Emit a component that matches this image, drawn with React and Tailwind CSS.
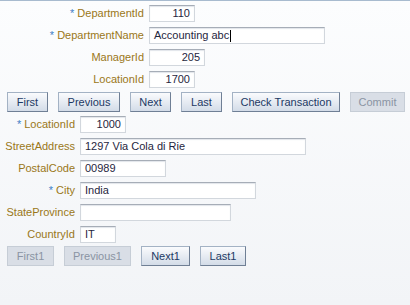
const font = { fontFamily: '"Liberation Sans", Arial, sans-serif' };

const topFields = [
  { label: "DepartmentId", value: "110", width: "w-[46px]", required: true, align: "right" },
  { label: "DepartmentName", value: "Accounting abc", width: "w-[176px]", required: true, caret: true },
  { label: "ManagerId", value: "205", width: "w-[56px]", align: "right" },
  { label: "LocationId", value: "1700", width: "w-[46px]", align: "right" },
];

const bottomFields = [
  { label: "LocationId", value: "1000", width: "w-[46px]", required: true, align: "right" },
  { label: "StreetAddress", value: "1297 Via Cola di Rie", width: "w-[226px]" },
  { label: "PostalCode", value: "00989", width: "w-[86px]" },
  { label: "City", value: "India", width: "w-[176px]", required: true },
  { label: "StateProvince", value: "", width: "w-[151px]" },
  { label: "CountryId", value: "IT", width: "w-[36px]" },
];

function Field({ field, labelWidth }) {
  return (
    <div className="flex h-[17px] items-center">
      <div
        className={`${labelWidth} shrink-0 pr-[5px] text-right text-[11px] leading-none text-[#9a7718]`}
      >
        {field.required && <span className="text-[#3f7fc6]">* </span>}
        {field.label}
      </div>
      <div
        className={`${field.width} flex h-[17px] items-center border border-[#d2d7dd] border-t-[#a6adb7] bg-white px-[4px] text-[11px] leading-none text-[#1f2640] shadow-[inset_0_1px_1px_#e2e5ea] ${
          field.align === "right" ? "justify-end" : "justify-start"
        }`}
      >
        <span className="whitespace-nowrap">{field.value}</span>
        {field.caret && <span className="ml-[1px] h-[12px] w-[1px] bg-black" />}
      </div>
    </div>
  );
}

function Button({ label, width, disabled }) {
  return (
    <div
      className={`${width} flex h-[20px] shrink-0 items-center justify-center text-[11px] leading-none ${
        disabled
          ? "border border-[#c6cdd6] bg-[#d9dee6] text-[#8a94a3]"
          : "border border-[#a3b2c4] border-r-[#6f7f95] border-b-[#6f7f95] bg-gradient-to-b from-[#fafbfd] to-[#d3dce8] text-[#1c3964]"
      }`}
    >
      {label}
    </div>
  );
}

export default function App() {
  return (
    <div
      style={font}
      className="flex h-[305px] w-[410px] flex-col border-t border-[#a8bbcf] bg-gradient-to-b from-[#fcfdfe] to-[#f2f4f7] pt-[4px]"
    >
      <div className="flex flex-col gap-[5px]">
        {topFields.map((f) => (
          <Field key={f.label} field={f} labelWidth="w-[149px]" />
        ))}
      </div>

      <div className="mt-[4px] flex gap-[10px] pl-[7px]">
        <Button label="First" width="w-[41px]" />
        <Button label="Previous" width="w-[62px]" />
        <Button label="Next" width="w-[41px]" />
        <Button label="Last" width="w-[41px]" />
        <Button label="Check Transaction" width="w-[108px]" />
        <Button label="Commit" width="w-[55px]" disabled />
      </div>

      <div className="mt-[4px] flex flex-col gap-[5px]">
        {bottomFields.map((f) => (
          <Field key={f.label} field={f} labelWidth="w-[80px]" />
        ))}
      </div>

      <div className="mt-[3px] flex gap-[10px] pl-[7px]">
        <Button label="First1" width="w-[47px]" disabled />
        <Button label="Previous1" width="w-[67px]" disabled />
        <Button label="Next1" width="w-[49px]" />
        <Button label="Last1" width="w-[46px]" />
      </div>
    </div>
  );
}
